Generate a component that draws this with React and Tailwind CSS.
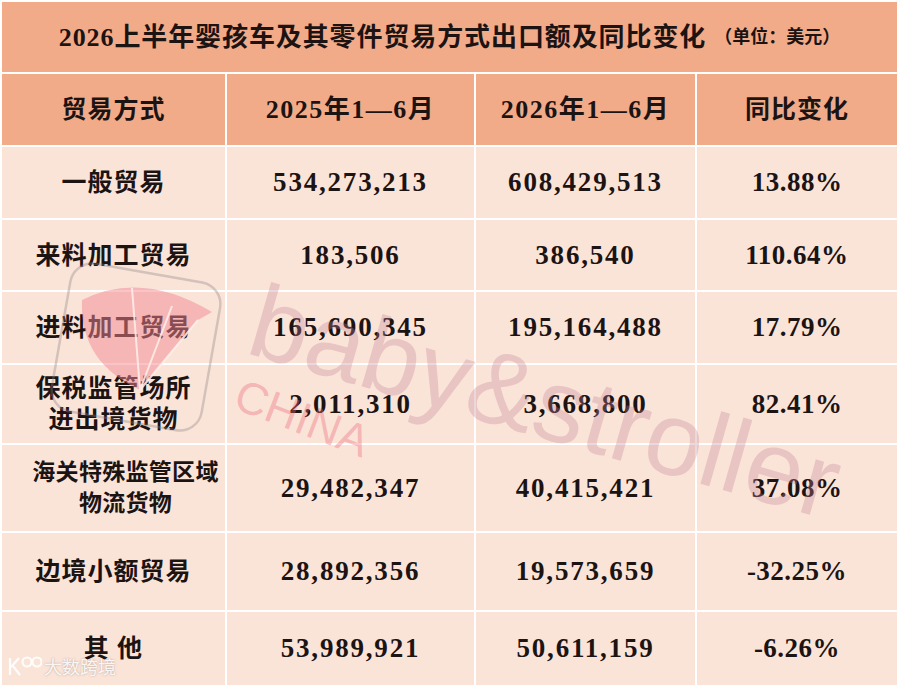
import React from 'react';

const SERIF = "font-['Liberation_Serif','Noto_Sans_CJK_SC',serif]";

const ROWS = [
  { name: ['一般贸易'], a: '534,273,213', b: '608,429,513', c: '13.88%' },
  { name: ['来料加工贸易'], a: '183,506', b: '386,540', c: '110.64%' },
  { name: ['进料加工贸易'], a: '165,690,345', b: '195,164,488', c: '17.79%' },
  { name: ['保税监管场所', '进出境货物'], a: '2,011,310', b: '3,668,800', c: '82.41%' },
  { name: ['海关特殊监管区域', '物流货物'], a: '29,482,347', b: '40,415,421', c: '37.08%', small: true },
  { name: ['边境小额贸易'], a: '28,892,356', b: '19,573,659', c: '-32.25%' },
  { name: ['其 他'], a: '53,989,921', b: '50,611,159', c: '-6.26%' },
];

function Cell({ children, head, className = '' }) {
  return (
    <div
      className={
        'flex flex-col items-center justify-center text-center font-bold text-[#1c1313] ' +
        (head ? 'bg-[#f2ab89] ' : 'bg-[#fae4d8] ') +
        className
      }
    >
      {children}
    </div>
  );
}

// tilted rounded square with the pink fan, drawn in page coordinates
function LogoMark() {
  return (
    <svg width="260" height="460" viewBox="0 0 260 460" className="absolute left-0 top-0">
      <rect
        x="60"
        y="272"
        width="152"
        height="150"
        rx="22"
        transform="rotate(10 136 347)"
        fill="none"
        stroke="rgba(140,130,130,0.35)"
        strokeWidth="2.5"
      />
      <path
        d="M140 390 C102 372 80 344 82 300 Q142 270 212 312 L198 320 Z"
        fill="rgba(242,135,148,0.5)"
      />
      <path
        d="M140 390 L132 288 M140 390 L172 306 M140 390 L198 320"
        stroke="rgba(255,240,235,0.85)"
        strokeWidth="2"
        fill="none"
      />
    </svg>
  );
}

export default function App() {
  return (
    <div className={`relative w-[900px] h-[688px] overflow-hidden bg-white ${SERIF}`}>
      <div className="grid grid-cols-[223px_247px_219px_200px] grid-rows-[70px_71px_71px_70px_71px_78px_86px_77px_73px] gap-[2px] pt-[2px] pl-[2px] pr-[3px] pb-[3px]">
        <Cell head className="col-span-4 !flex-row items-baseline">
          <span className="text-[26px] tracking-[0.9px]">2026上半年婴孩车及其零件贸易方式出口额及同比变化</span>
          <span className="text-[18px] ml-[8px]">（单位：美元）</span>
        </Cell>
        <Cell head><span className="text-[25px] tracking-[1px]">贸易方式</span></Cell>
        <Cell head><span className="text-[26px] tracking-[1.5px]">2025年1—6月</span></Cell>
        <Cell head><span className="text-[26px] tracking-[1.5px]">2026年1—6月</span></Cell>
        <Cell head><span className="text-[25px] tracking-[1px]">同比变化</span></Cell>

        {ROWS.map((r) => (
          <React.Fragment key={r.a}>
            <Cell className={r.small ? 'pl-[24px]' : ''}>
              {r.name.map((n) => (
                <span
                  key={n}
                  className={
                    (r.small ? 'text-[23px] tracking-[0.3px] ' : 'text-[25px] tracking-[1px] ') +
                    'leading-[31px] whitespace-pre'
                  }
                >
                  {n}
                </span>
              ))}
            </Cell>
            <Cell><span className="text-[27px] tracking-[1.8px]">{r.a}</span></Cell>
            <Cell><span className="text-[27px] tracking-[1.8px]">{r.b}</span></Cell>
            <Cell><span className="text-[27px] tracking-[0.5px]">{r.c}</span></Cell>
          </React.Fragment>
        ))}
      </div>

      {/* watermarks */}
      <div className="pointer-events-none absolute inset-0">
        <LogoMark />
        <div className="absolute left-[268px] top-[268px] origin-top-left rotate-[16deg] font-['Liberation_Sans',sans-serif] text-[104px] leading-none text-[rgba(195,130,150,0.32)] whitespace-nowrap">
          baby&amp;stroller
        </div>
        <div className="absolute left-[245px] top-[372px] origin-top-left rotate-[21deg] font-['Liberation_Sans',sans-serif] text-[45px] leading-none text-[rgba(238,110,125,0.4)] whitespace-nowrap">
          CHINA
        </div>
        <div className="absolute left-[6px] top-[654px] flex items-center gap-[2px] text-[rgba(255,255,255,0.9)]">
          <svg width="36" height="24" viewBox="0 0 36 24" fill="none" stroke="currentColor" strokeWidth="2.2">
            <path d="M4 4 V21 M5 13 L13 4 M7 12 L14 21" />
            <circle cx="21" cy="8" r="4.5" />
            <circle cx="31" cy="8" r="4.5" />
          </svg>
          <span className="font-['Noto_Sans_CJK_SC',sans-serif] text-[18px] leading-none [text-shadow:0_0_2px_rgba(120,90,80,0.5)]">
            大数跨境
          </span>
        </div>
      </div>
    </div>
  );
}
